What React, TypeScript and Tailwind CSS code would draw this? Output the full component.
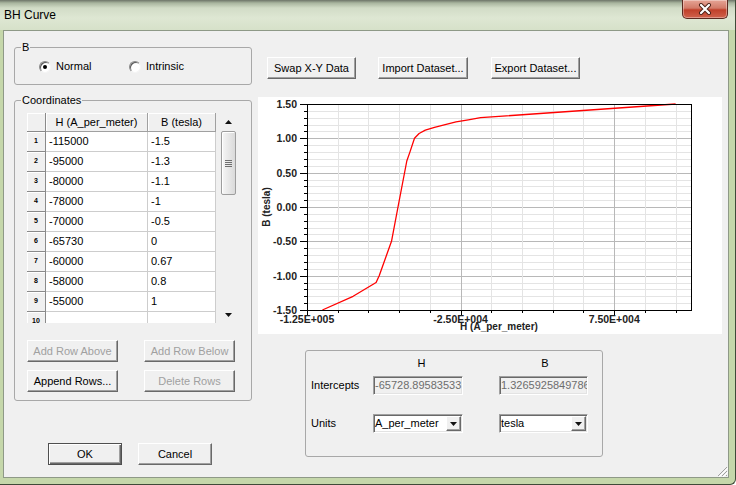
import React from 'react';

// BH Curve dialog, classic Win7 look

const raised =
  'border border-t-white border-l-white border-r-[#696969] border-b-[#696969] bg-[#f0f0f0] shadow-[inset_-1px_-1px_0_#a0a0a0]';
const sunken =
  'border border-t-[#a0a0a0] border-l-[#a0a0a0] border-r-white border-b-white shadow-[inset_1px_1px_0_#696969,inset_-1px_-1px_0_#e3e3e3]';

const ROWS: [string, string][] = [
  ['-115000', '-1.5'],
  ['-95000', '-1.3'],
  ['-80000', '-1.1'],
  ['-78000', '-1'],
  ['-70000', '-0.5'],
  ['-65730', '0'],
  ['-60000', '0.67'],
  ['-58000', '0.8'],
  ['-55000', '1'],
  ['', ''],
];

// curve points, table rows plus the saturation tail
const CURVE: [number, number][] = [
  [-115000, -1.5],
  [-95000, -1.3],
  [-80000, -1.1],
  [-78000, -1],
  [-70000, -0.5],
  [-65730, 0],
  [-60000, 0.67],
  [-58000, 0.8],
  [-55000, 1],
  [-52000, 1.07],
  [-48000, 1.12],
  [-42000, 1.16],
  [-35000, 1.2],
  [-28000, 1.24],
  [-20000, 1.27],
  [-12000, 1.3],
  [115000, 1.5],
];

function Button({
  children,
  className,
  disabled,
  primary,
}: {
  children: React.ReactNode;
  className: string;
  disabled?: boolean;
  primary?: boolean;
}) {
  const frame = primary
    ? 'border border-[#4f4f4f] bg-[#f0f0f0] shadow-[inset_1px_1px_0_#fff,inset_-1px_-1px_0_#696969,inset_-2px_-2px_0_#a0a0a0]'
    : raised;
  return (
    <button
      type="button"
      className={`flex h-[22px] items-center justify-center leading-[13px] ${frame} ${
        disabled ? 'text-[#a0a0a0]' : 'text-black'
      } ${className}`}
    >
      {children}
    </button>
  );
}

function Radio({ checked, label, className }: { checked?: boolean; label: string; className: string }) {
  return (
    <div className={`flex items-center ${className}`}>
      <span className="flex h-[12px] w-[12px] items-center justify-center rounded-full border border-t-[#8a8a8a] border-l-[#8a8a8a] border-r-[#f4f4f4] border-b-[#f4f4f4] bg-white shadow-[inset_1px_1px_0_#5a5a5a]">
        {checked ? <span className="h-[4px] w-[4px] rounded-full bg-black" /> : null}
      </span>
      <span className="ml-[5px] leading-[13px]">{label}</span>
    </div>
  );
}

function Arrow({ up }: { up?: boolean }) {
  return (
    <svg width="7" height="4" viewBox="0 0 7 4">
      <path d={up ? 'M0 4 L3.5 0 L7 4 Z' : 'M0 0 L7 0 L3.5 4 Z'} fill="#111" />
    </svg>
  );
}

function DataGrid() {
  return (
    <div className="flex h-[210px] w-[210px]">
      <div className="h-[210px] w-[189px] overflow-hidden bg-white">
        <div className="flex h-[19px]">
          <div className="w-[19px] border-r border-b border-[#8a8a8a] bg-[#f0f0f0] shadow-[inset_1px_1px_0_#fff]" />
          <div className="flex w-[102px] items-center justify-center border-r border-b border-[#a0a0a0] bg-[#f0f0f0] shadow-[inset_1px_1px_0_#fff]">
            H (A_per_meter)
          </div>
          <div className="flex w-[68px] items-center justify-center border-r border-b border-[#a0a0a0] bg-[#f0f0f0] shadow-[inset_1px_1px_0_#fff]">
            B (tesla)
          </div>
        </div>
        {ROWS.map((row, i) => (
          <div key={i} className="flex h-[20px]">
            <div className="flex w-[19px] items-center justify-center border-r border-b border-[#8a8a8a] bg-[#f0f0f0] text-[7px] font-bold shadow-[inset_1px_1px_0_#fff]">
              {i + 1}
            </div>
            <div className="flex w-[102px] items-center border-r border-b border-[#cdcdcd] pl-[3px]">{row[0]}</div>
            <div className="flex w-[68px] items-center border-r border-b border-[#cdcdcd] pl-[3px]">{row[1]}</div>
          </div>
        ))}
      </div>
      <div className="ml-[4px] flex h-[210px] w-[17px] flex-col bg-[#f0f0f0]">
        <div className="flex h-[18px] items-center justify-center">
          <Arrow up />
        </div>
        <div className="mx-[1px] h-[64px] rounded-[2px] border border-[#9d9d9d] bg-gradient-to-r from-[#f6f6f6] to-[#dadada] shadow-[inset_1px_1px_0_#fff]">
          <div className="flex h-full flex-col items-center justify-center gap-[1px]">
            <span className="h-[1px] w-[7px] bg-[#6f6f6f]" />
            <span className="h-[1px] w-[7px] bg-[#6f6f6f]" />
            <span className="h-[1px] w-[7px] bg-[#6f6f6f]" />
            <span className="h-[1px] w-[7px] bg-[#6f6f6f]" />
          </div>
        </div>
        <div className="flex-1" />
        <div className="flex h-[17px] items-center justify-center">
          <Arrow />
        </div>
      </div>
    </div>
  );
}

const X0 = 49;
const X1 = 433;
const Y0 = 7;
const Y1 = 213;
const hx = (h: number) => X0 + ((h + 125000) / 250000) * (X1 - X0);
const by = (b: number) => Y1 - ((b + 1.5) / 3) * (Y1 - Y0);
const px = (v: number) => Math.round(v) + 0.5;

function Chart() {
  const vLines = Array.from({ length: 12 }, (_, k) => -125000 + (k + 1) * 20000);
  const hLines = Array.from({ length: 29 }, (_, k) => k + 1);
  const font = 'Liberation Sans, Arial, sans-serif';
  const yLabels = [-1.5, -1, -0.5, 0, 0.5, 1, 1.5];
  const xLabels: [number, string][] = [
    [-125000, '-1.25E+005'],
    [-25000, '-2.50E+004'],
    [75000, '7.50E+004'],
  ];
  return (
    <svg width="464" height="237" viewBox="0 0 464 237" className="block">
      <rect width="464" height="237" fill="#fff" />
      {hLines.map((k) => (
        <line
          key={`h${k}`}
          x1={X0}
          x2={X1}
          y1={px(by(-1.5 + k * 0.1))}
          y2={px(by(-1.5 + k * 0.1))}
          stroke={k % 5 === 0 ? '#b8b8b8' : '#e4e4e4'}
        />
      ))}
      {vLines.map((h) => (
        <line
          key={`v${h}`}
          x1={px(hx(h))}
          x2={px(hx(h))}
          y1={Y0}
          y2={Y1}
          stroke={(h + 125000) % 100000 === 0 ? '#b8b8b8' : '#e4e4e4'}
        />
      ))}
      <polyline
        points={CURVE.map(([h, b]) => `${hx(h).toFixed(1)},${by(b).toFixed(1)}`).join(' ')}
        fill="none"
        stroke="#ff0000"
        strokeWidth="1.3"
        strokeLinejoin="round"
      />
      <rect x={X0 + 0.5} y={Y0 + 0.5} width={X1 - X0} height={Y1 - Y0} fill="none" stroke="#000" />
      {Array.from({ length: 31 }, (_, k) => (
        <line
          key={`ty${k}`}
          x1={X0 - (k % 5 === 0 ? 7 : 3)}
          x2={X0}
          y1={px(by(-1.5 + k * 0.1))}
          y2={px(by(-1.5 + k * 0.1))}
          stroke="#000"
        />
      ))}
      {Array.from({ length: 13 }, (_, k) => (
        <line
          key={`tx${k}`}
          x1={px(hx(-125000 + k * 20000))}
          x2={px(hx(-125000 + k * 20000))}
          y1={Y1}
          y2={Y1 + (k % 5 === 0 ? 5 : 3)}
          stroke="#000"
        />
      ))}
      {yLabels.map((b) => (
        <text
          key={`yl${b}`}
          x={39}
          y={by(b) + 4}
          textAnchor="end"
          fontFamily={font}
          fontSize="10.5"
          fontWeight="bold"
          fill="#222"
        >
          {b.toFixed(2)}
        </text>
      ))}
      {xLabels.map(([h, t]) => (
        <text
          key={t}
          x={hx(h)}
          y={226}
          textAnchor="middle"
          fontFamily={font}
          fontSize="10.5"
          fontWeight="bold"
          fill="#222"
        >
          {t}
        </text>
      ))}
      <text x={241} y={233} textAnchor="middle" fontFamily={font} fontSize="10" fontWeight="bold" fill="#222">
        H (A_per_meter)
      </text>
      <text
        transform="translate(12 110) rotate(-90)"
        textAnchor="middle"
        fontFamily={font}
        fontSize="10"
        fontWeight="bold"
        fill="#222"
      >
        B (tesla)
      </text>
    </svg>
  );
}

function Field({ text, className }: { text: string; className: string }) {
  return (
    <div
      className={`flex h-[19px] items-center overflow-hidden whitespace-nowrap bg-[#f0f0f0] pl-[1px] text-[#6d6d6d] ${sunken} ${className}`}
    >
      {text}
    </div>
  );
}

function Select({ value, className }: { value: string; className: string }) {
  return (
    <div className={`flex h-[19px] items-center bg-white ${sunken} ${className}`}>
      <span className="flex-1 pl-[1px]">{value}</span>
      <span className={`mr-[1px] flex h-[15px] w-[15px] items-center justify-center ${raised}`}>
        <Arrow />
      </span>
    </div>
  );
}

function TitleBar() {
  return (
    <div className="flex h-[30px] justify-between bg-[linear-gradient(to_bottom,#6d7468_0px,#a9b59f_3px,#d2dcc7_8px,#dee7d3_18px,#d6e1c9_30px)]">
      <div className="pl-[4px] pt-[8px] text-[12px] leading-[14px] text-black">BH Curve</div>
      <div className="mr-[7px] flex h-[19px] w-[46px] items-center justify-center rounded-b-[5px] border border-t-0 border-[#5b2a20] bg-[linear-gradient(to_bottom,#e6a596_0%,#d27b69_45%,#c0402a_55%,#d0624c_100%)] shadow-[inset_0_0_0_1px_rgba(255,255,255,0.35)]">
        <svg width="14" height="12" viewBox="0 0 14 12">
          <path d="M3 2 L11 10 M11 2 L3 10" stroke="#4a2118" strokeWidth="4" strokeLinecap="round" />
          <path d="M3 2 L11 10 M11 2 L3 10" stroke="#fff" strokeWidth="2.2" strokeLinecap="round" />
        </svg>
      </div>
    </div>
  );
}

export default function App() {
  return (
    <div className="relative flex h-[485px] w-[736px] flex-col overflow-hidden rounded-br-[6px] border-r border-b border-[#3f4a38] bg-[#c5d7aa] font-['Liberation_Sans',Arial,sans-serif] text-[11px] text-black">
      <TitleBar />
      <div className="relative mb-[6px] ml-[3px] mr-[6px] flex flex-1 border border-[#8e9987] bg-[#f0f0f0]">
        {/* left column */}
        <div className="ml-[10px] flex w-[238px] flex-col">
          <fieldset className="mt-[10px] h-[44px] rounded-[3px] border border-[#a8a8a8]">
            <legend className="ml-[6px] px-[1px] leading-[13px]">B</legend>
            <div className="mt-[6px] flex pl-[24px]">
              <Radio checked label="Normal" className="w-[90px]" />
              <Radio label="Intrinsic" className="" />
            </div>
          </fieldset>

          <fieldset className="mt-[9px] h-[307px] rounded-[3px] border border-[#a8a8a8]">
            <legend className="ml-[6px] px-[1px] leading-[13px]">Coordinates</legend>
            <div className="ml-[12px] mt-[6px]">
              <DataGrid />
              <div className="mt-[17px] flex gap-[26px]">
                <Button disabled className="w-[91px]">
                  Add Row Above
                </Button>
                <Button disabled className="w-[91px]">
                  Add Row Below
                </Button>
              </div>
              <div className="mt-[8px] flex gap-[26px]">
                <Button className="w-[91px]">Append Rows...</Button>
                <Button disabled className="w-[91px]">
                  Delete Rows
                </Button>
              </div>
            </div>
          </fieldset>

          <div className="ml-[34px] mt-[42px] flex gap-[16px]">
            <Button primary className="w-[74px]">
              OK
            </Button>
            <Button className="w-[74px]">Cancel</Button>
          </div>
        </div>

        {/* right column */}
        <div className="ml-[6px] flex flex-col">
          <div className="ml-[9px] mt-[26px] flex">
            <Button className="w-[89px]">Swap X-Y Data</Button>
            <Button className="ml-[22px] w-[90px]">Import Dataset...</Button>
            <Button className="ml-[23px] w-[89px]">Export Dataset...</Button>
          </div>
          <div className="mt-[18px]">
            <Chart />
          </div>
          <div className="ml-[47px] mt-[16px] h-[107px] w-[298px] rounded-[3px] border border-[#a8a8a8]">
            <div className="flex pt-[6px] leading-[13px]">
              <div className="w-[67px]" />
              <div className="w-[90px] pl-[7px] text-center">H</div>
              <div className="ml-[36px] w-[89px] pl-[3px] text-center">B</div>
            </div>
            <div className="mt-[6px] flex h-[19px] items-center">
              <div className="w-[67px] pl-[5px]">Intercepts</div>
              <Field text="-65728.89583533" className="w-[90px]" />
              <Field text="1.3265925849786" className="ml-[36px] w-[89px]" />
            </div>
            <div className="mt-[19px] flex h-[19px] items-center">
              <div className="w-[67px] pl-[5px]">Units</div>
              <Select value="A_per_meter" className="w-[90px]" />
              <Select value="tesla" className="ml-[36px] w-[89px]" />
            </div>
          </div>
        </div>

        {/* size grip */}
        <svg width="12" height="12" viewBox="0 0 12 12" className="absolute bottom-0 right-0">
          <path d="M11 2 L2 11 M11 6 L6 11 M11 10 L10 11" stroke="#a0a0a0" strokeWidth="1" />
          <path d="M12 3 L3 12 M12 7 L7 12" stroke="#fff" strokeWidth="1" />
        </svg>
      </div>
    </div>
  );
}
